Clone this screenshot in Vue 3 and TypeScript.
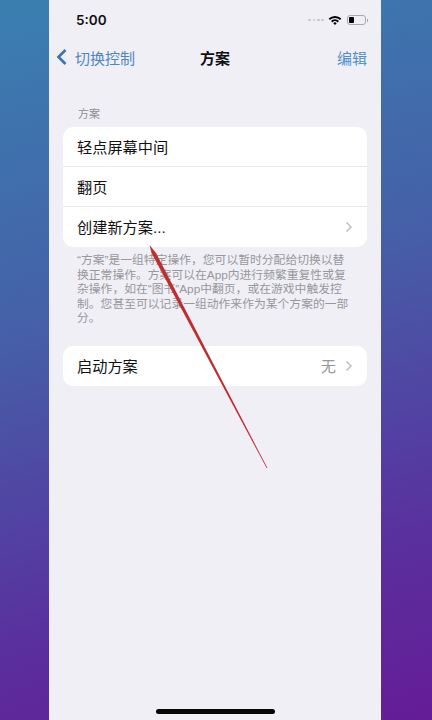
<script setup lang="ts">
const rows = ['轻点屏幕中间', '翻页']
</script>

<template>
  <div class="wall">
    <main class="phone">
      <div class="status">
        <span class="time">5:00</span>
        <div class="status-icons">
          <span class="dots"><i></i><i></i><i></i><i></i></span>
          <svg class="wifi" width="14" height="11" viewBox="0 0 14 11">
            <path d="M0.6 3.6A9 9 0 0 1 13.4 3.6L12 5A7 7 0 0 0 2 5Z" fill="#000" />
            <path d="M3 6A5.6 5.6 0 0 1 11 6L9.6 7.4A3.6 3.6 0 0 0 4.4 7.4Z" fill="#000" />
            <path d="M5.3 8.2A2.4 2.4 0 0 1 8.700 8.2L7 10Z" fill="#000" />
          </svg>
          <span class="battery"><span class="level"></span></span>
          <span class="nub"></span>
        </div>
      </div>

      <nav class="nav">
        <div class="back">
          <svg width="12" height="18" viewBox="0 0 12 18">
            <path d="M9.5 2L2.5 9L9.5 16" fill="none" stroke="#3f72b4" stroke-width="2.6" />
          </svg>
          <span>切换控制</span>
        </div>
        <strong>方案</strong>
        <span class="edit">编辑</span>
      </nav>

      <div class="section-label">方案</div>
      <section class="card">
        <div v-for="r in rows" :key="r" class="row">{{ r }}</div>
        <div class="row">
          <span>创建新方案...</span>
          <svg class="chev" width="8" height="12" viewBox="0 0 8 12">
            <path d="M1.5 1.5L6 6L1.5 10.5" fill="none" stroke="#c2c2c7" stroke-width="1.7" />
          </svg>
        </div>
      </section>

      <p class="note">“方案”是一组特定操作，您可以暂时分配给切换以替换正常操作。方案可以在App内进行频繁重复性或复杂操作，如在“图书”App中翻页，或在游戏中触发控制。您甚至可以记录一组动作来作为某个方案的一部分。</p>

      <section class="card second">
        <div class="row">
          <span>启动方案</span>
          <div class="value">
            <span>无</span>
            <svg class="chev" width="8" height="12" viewBox="0 0 8 12">
              <path d="M1.5 1.5L6 6L1.5 10.5" fill="none" stroke="#c2c2c7" stroke-width="1.7" />
            </svg>
          </div>
        </div>
      </section>

      <div class="home"></div>

      <svg class="arrow" width="432" height="720" viewBox="0 0 432 720">
        <polygon points="149.500,245 156,253 267.400,468 266.600,468 151.500,253" fill="#bd2f2f" />
      </svg>
    </main>
  </div>
</template>

<style scoped>
.wall {
  width: 432px;
  height: 720px;
  overflow: hidden;
  background: linear-gradient(165deg, #3a7fb0 0%, #4560a8 40%, #5a2f9e 78%, #651c96 100%);
  display: flex;
  padding-left: 49px;
  box-sizing: border-box;
  font-family: "Liberation Sans", "Noto Sans CJK SC", sans-serif;
}
.phone {
  width: 332px;
  height: 720px;
  flex: none;
  background: #f0eff5;
  display: flex;
  flex-direction: column;
  padding: 0 14px;
  box-sizing: border-box;
  position: relative;
  color: #111;
}
.status {
  height: 40px;
  display: flex;
  align-items: center;
  justify-content: space-between;
  padding: 0 0 0 13px;
}
.time {
  font: 600 13.500px "Inter", "Liberation Sans", sans-serif;
}
.status-icons {
  display: flex;
  align-items: center;
  margin-right: -1px;
}
.dots {
  display: flex;
  gap: 1.500px;
  margin-right: 4px;
}
.dots i {
  width: 2.800px;
  height: 2.800px;
  border-radius: 50%;
  background: #c4c4c9;
}
.wifi {
  margin-right: 5px;
}
.battery {
  width: 19px;
  height: 10px;
  border: 1px solid #a9a9ad;
  border-radius: 3px;
  padding: 1px;
  display: flex;
  box-sizing: border-box;
}
.level {
  width: 5px;
  background: #000;
  border-radius: 1px;
}
.nub {
  width: 1px;
  height: 3px;
  margin-left: 1px;
  background: #a9a9ad;
}
.nav {
  height: 38px;
  margin-top: -2px;
  display: flex;
  align-items: center;
  justify-content: space-between;
  position: relative;
  font-size: 15px;
}
.back {
  display: flex;
  align-items: center;
  gap: 7px;
  margin-left: -7px;
  color: #4f86c0;
}
.nav strong {
  position: absolute;
  left: 137px;
  width: 30px;
  font-weight: 700;
  color: #111;
  white-space: nowrap;
}
.edit {
  color: #4f8ec9;
}
.section-label {
  margin-top: 30px;
  padding-left: 15px;
  font-size: 11px;
  line-height: 16px;
  color: #8e8e93;
}
.card {
  margin-top: 5px;
  background: #fff;
  border-radius: 10px;
  overflow: hidden;
}
.row {
  height: 40px;
  display: flex;
  align-items: center;
  justify-content: space-between;
  padding: 0 14px 2px;
  font-size: 15.200px;
  border-bottom: 1px solid #e8e8ea;
  box-sizing: border-box;
}
.row:last-child {
  border-bottom: 0;
}
.chev {
  margin-top: 2px;
}
.note {
  margin: 6px 0 0;
  padding: 0 11px 0 14px;
  font-size: 11.800px;
  line-height: 14.500px;
  color: #97979c;
}
.second {
  margin-top: 20.500px;
}
.value {
  display: flex;
  align-items: center;
  gap: 9px;
  color: #97979c;
}
.home {
  position: absolute;
  left: 107px;
  bottom: 6px;
  width: 119px;
  height: 5px;
  border-radius: 3px;
  background: #050505;
}
.arrow {
  position: absolute;
  left: -49px;
  top: 0;
  pointer-events: none;
}
</style>
